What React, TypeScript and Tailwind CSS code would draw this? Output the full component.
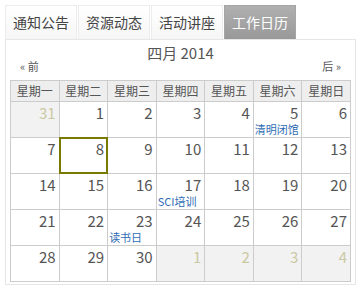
const tabs = ["通知公告", "资源动态", "活动讲座", "工作日历"];
const weekdays = ["星期一", "星期二", "星期三", "星期四", "星期五", "星期六", "星期日"];

interface Day {
  n: number;
  other?: boolean;
  today?: boolean;
  event?: string;
}

const weeks: Day[][] = [
  [{ n: 31, other: true }, { n: 1 }, { n: 2 }, { n: 3 }, { n: 4 }, { n: 5, event: "清明闭馆" }, { n: 6 }],
  [{ n: 7 }, { n: 8, today: true }, { n: 9 }, { n: 10 }, { n: 11 }, { n: 12 }, { n: 13 }],
  [{ n: 14 }, { n: 15 }, { n: 16 }, { n: 17, event: "SCI培训" }, { n: 18 }, { n: 19 }, { n: 20 }],
  [{ n: 21 }, { n: 22 }, { n: 23, event: "读书日" }, { n: 24 }, { n: 25 }, { n: 26 }, { n: 27 }],
  [{ n: 28 }, { n: 29 }, { n: 30 }, { n: 1, other: true }, { n: 2, other: true }, { n: 3, other: true }, { n: 4, other: true }],
];

export default function App() {
  return (
    <div
      className="w-[361px] h-[290px] bg-white pt-[5px] pl-[5px]"
      style={{ fontFamily: '"Noto Sans CJK SC", sans-serif' }}
    >
      {/* tabs */}
      <div className="flex gap-[1px]">
        {tabs.map((t, i) => (
          <div
            key={t}
            className={`w-[72px] h-[34px] flex items-center justify-center text-[14px] border border-b-0 ${
              i === 3
                ? "bg-gradient-to-b from-[#b0b0b0] to-[#999999] border-[#a5a5a5] text-white"
                : "bg-gradient-to-b from-white to-[#f6f6f6] border-[#ececec] text-[#444]"
            }`}
          >
            {t}
          </div>
        ))}
      </div>

      {/* panel */}
      <div className="w-[351px] h-[246px] border border-[#e6e6e6] px-[4px]">
        <div className="pt-[3px] text-center text-[15px] leading-[20px] text-[#555]">四月 2014</div>
        <div className="-mt-[3px] flex justify-between px-[10px] text-[11px] leading-[12px] text-[#555]">
          <span>« 前</span>
          <span>后 »</span>
        </div>

        <table className="mt-[8px] w-[341px] table-fixed border-collapse">
          <thead>
            <tr>
              {weekdays.map((w) => (
                <th
                  key={w}
                  className="h-[21px] border border-[#cccccc] bg-[#eeeeee] text-[12px] font-normal leading-[18px] text-[#555] p-0"
                >
                  {w}
                </th>
              ))}
            </tr>
          </thead>
          <tbody>
            {weeks.map((week, r) => (
              <tr key={r}>
                {week.map((d, c) => (
                  <td
                    key={c}
                    className={`relative h-[36px] border border-[#cccccc] p-0 align-top ${
                      d.other ? "bg-[#f2f2f2]" : "bg-white"
                    }`}
                  >
                    <div
                      className={`pr-[3px] pt-[2px] text-right text-[15px] leading-[17px] ${
                        d.other ? "text-[#cbc9a3]" : "text-[#555]"
                      }`}
                    >
                      {d.n}
                    </div>
                    {d.event && (
                      <div className="pl-[1px] pt-[2px] text-[11px] leading-[12px] text-[#2f6db5] whitespace-nowrap">
                        {d.event}
                      </div>
                    )}
                    {d.today && (
                      <div className="absolute -inset-[1px] border-2 border-[#7a7a00]" />
                    )}
                  </td>
                ))}
              </tr>
            ))}
          </tbody>
        </table>
      </div>
    </div>
  );
}
